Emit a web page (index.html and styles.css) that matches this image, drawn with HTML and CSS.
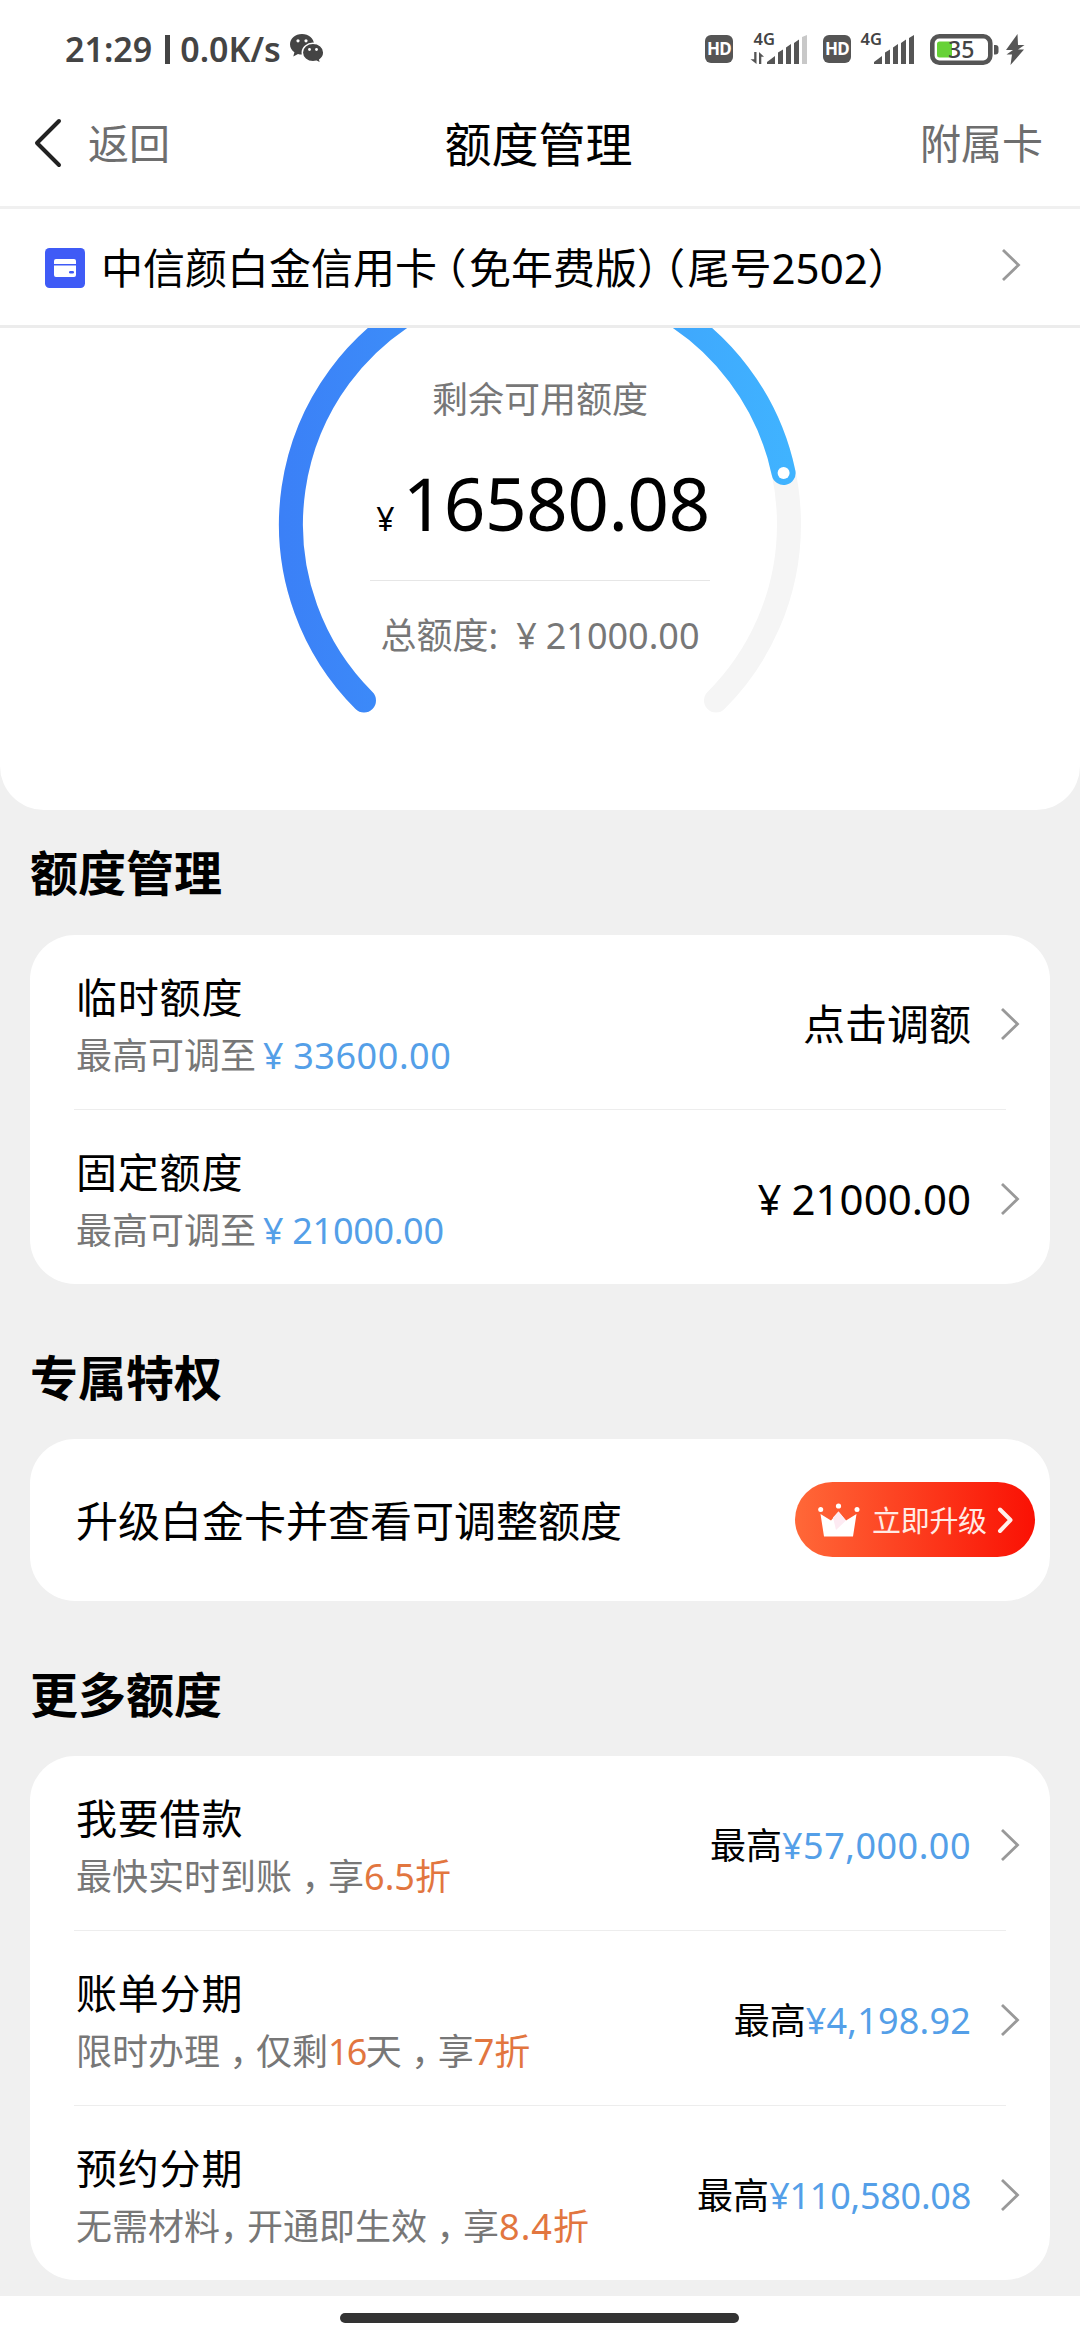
FILE: index.html
```html
<!DOCTYPE html>
<html lang="zh-CN">
<head>
<meta charset="utf-8">
<title>额度管理</title>
<link rel="stylesheet" href="styles.css">
</head>
<body>
<svg class="defs" aria-hidden="true">
  <symbol id="arrow" viewBox="0 0 20 36"><path d="M2 3 L17.5 18 L2 33" fill="none" stroke="#999" stroke-width="2.8"/></symbol>
</svg>
<div class="screen">
  <header class="status">
    <div class="status-left">
      <span class="clock">21:29</span><i class="bar"></i><span class="speed">0.0K/s</span>
      <svg class="wechat" width="34" height="30" viewBox="0 0 34 30">
        <path fill="#444" d="M12 0C5.2 0 0 4.6 0 10.3c0 3.300 1.700 6.100 4.400 8L3.300 22.500 8 20c1.300.4 2.600.6 4 .6C18.700 20.600 24 16 24 10.300S18.700 0 12 0z"/>
        <path fill="#444" stroke="#fff" stroke-width="1.500" d="M23 9.300c-6 0-10.700 4-10.700 9.200S17 27.800 23 27.800c1.200 0 2.400-.2 3.500-.5l4.300 2.200-1-3.700c2.400-1.700 4-4.300 4-7.300 0-5.200-4.800-9.200-10.800-9.200z"/>
        <g fill="#fff"><circle cx="8" cy="6.800" r="1.600"/><circle cx="16" cy="6.800" r="1.600"/><circle cx="19.500" cy="15.500" r="1.400"/><circle cx="26.500" cy="15.500" r="1.400"/></g>
      </svg>
    </div>
    <div class="status-right">
      <span class="hd">HD</span>
      <svg class="signal" width="58" height="48" viewBox="0 -8 58 48">
        <text class="net" x="3.500" y="13">4G</text>
        <g fill="#555"><path d="M4.200 20h2.300v12L.500 27.300h3.700z"/><path d="M9 32V20l5 4.700h-2.700V32z"/>
        <path d="M17 32v-2l8-6v8zM28 32V20.500l5-3V32zM36 32V15.500l5-3.500v20zM44 32V11l5-3.500V32z"/></g>
        <path fill="#c8c8c8" d="M52 32V5l5-2v29z"/>
      </svg>
      <span class="hd">HD</span>
      <svg class="signal second" width="58" height="48" viewBox="0 -8 58 48">
        <text class="net" x="3.500" y="13">4G</text>
        <path fill="#555" d="M17 32v-2l8-6v8zM28 32V20.500l5-3V32zM36 32V15.500l5-3.500v20zM44 32V11l5-3.500V32zM52 32V6l5-3v29z"/>
      </svg>
      <svg class="battery" width="96" height="32" viewBox="0 0 96 32">
        <rect x="2.300" y="3.300" width="58" height="26.400" rx="7" fill="none" stroke="#555" stroke-width="4.600"/>
        <rect x="7" y="8.500" width="15" height="16" rx="2.500" fill="#66d236"/>
        <path fill="#555" d="M64 12h1.500a3 3 0 0 1 3 3v3.500a3 3 0 0 1-3 3H64z"/>
        <text class="level" x="18" y="25">35</text>
        <path fill="#555" d="M87.500 1 76 17h7l-6.500 4.500H82L80.500 32 94 16.500h-6l6.500-4.500h-6.500z"/>
      </svg>
    </div>
  </header>

  <nav class="nav">
    <div class="back">
      <svg width="28" height="50" viewBox="0 0 28 50"><path d="M25 3 L3 25 L25 47" fill="none" stroke="#222" stroke-width="4" stroke-linecap="round" stroke-linejoin="round"/></svg>
      <span>返回</span>
    </div>
    <h1>额度管理</h1>
    <span class="extra">附属卡</span>
  </nav>

  <div class="picker">
    <svg class="card-icon" width="40" height="40" viewBox="0 0 40 40">
      <rect width="40" height="40" rx="4.500" fill="#3f5bf6"/>
      <path fill="#fff" d="M11 11h18a2 2 0 0 1 2 2v3H9v-3a2 2 0 0 1 2-2zM9 17.500h22V27a2 2 0 0 1-2 2H11a2 2 0 0 1-2-2z"/>
      <rect x="24" y="23" width="5" height="2.600" rx="1.300" fill="#3f5bf6"/>
    </svg>
    <span class="card-name">中信颜白金信用卡<span class="po">（</span>免年费版<span class="pc">）</span><span class="po next">（</span>尾号2502<span class="pc">）</span></span>
    <svg class="go" width="20" height="36"><use href="#arrow"/></svg>
  </div>

  <section class="gauge">
    <svg class="dial" width="540" height="400" viewBox="270 328 540 400">
      <defs><linearGradient id="ring" gradientUnits="userSpaceOnUse" x1="280" y1="0" x2="800" y2="0">
        <stop offset="0" stop-color="#3b80f7"/><stop offset="1" stop-color="#40b4ff"/></linearGradient></defs>
      <g fill="none" stroke-width="24" stroke-linecap="round">
        <path stroke="#f5f5f5" d="M364 700.500 A249 249 0 1 1 716 700.500"/>
        <path stroke="url(#ring)" d="M364 700.500 A249 249 0 1 1 783.600 473"/>
      </g>
      <circle cx="783.600" cy="473" r="6" fill="#fff"/>
    </svg>
    <div class="readout">
      <p class="muted">剩余可用额度</p>
      <p class="amount"><small>¥</small><b>16580.08</b></p>
      <p class="muted total">总额度:<span class="yen">¥</span><span class="sum">21000.00</span></p>
    </div>
  </section>

  <main class="body">
    <h2>额度管理</h2>
    <div class="card">
      <div class="row">
        <div class="info"><h3>临时额度</h3><p>最高可调至<span class="blue"><span class="yen">¥</span>33600.00</span></p></div>
        <span class="value">点击调额</span>
        <svg class="go" width="20" height="36"><use href="#arrow"/></svg>
      </div>
      <div class="row">
        <div class="info"><h3>固定额度</h3><p>最高可调至<span class="blue tight"><span class="yen">¥</span>21000.00</span></p></div>
        <span class="value money"><span class="yen">¥</span>21000.00</span>
        <svg class="go" width="20" height="36"><use href="#arrow"/></svg>
      </div>
    </div>

    <h2>专属特权</h2>
    <div class="card vip">
      <span class="vip-text">升级白金卡并查看可调整额度</span>
      <div class="upgrade">
        <svg width="42" height="34" viewBox="0 0 42 34"><g fill="#fff"><path d="M2.500 11 13 17.500 20.500 8.500 28 17.500 38.500 11 35 33.500H6z"/><circle cx="2.700" cy="6.500" r="2.500"/><circle cx="20.500" cy="3" r="2.600"/><circle cx="39" cy="6.500" r="2.500"/></g><path fill="#fdeaf2" d="M20.500 8.500 28 17.500 18 27 15 14.500z"/></svg>
        <span>立即升级</span>
        <svg width="18" height="30" viewBox="0 0 18 30"><path d="M3 4.500 L13.500 15 L3 26" fill="none" stroke="#fff0ec" stroke-width="4" stroke-linecap="round" stroke-linejoin="round"/></svg>
      </div>
    </div>

    <h2>更多额度</h2>
    <div class="card">
      <div class="row">
        <div class="info"><h3>我要借款</h3><p>最快实时到账<span class="mid">，</span>享<em>6.5折</em></p></div>
        <span class="value limit">最高<span class="blue wide">¥57,000.00</span></span>
        <svg class="go" width="20" height="36"><use href="#arrow"/></svg>
      </div>
      <div class="row">
        <div class="info"><h3>账单分期</h3><p>限时办理<span class="mid">，</span>仅剩<em class="days">16</em>天<span class="mid">，</span>享<em>7折</em></p></div>
        <span class="value limit">最高<span class="blue">¥4,198.92</span></span>
        <svg class="go" width="20" height="36"><use href="#arrow"/></svg>
      </div>
      <div class="row">
        <div class="info"><h3>预约分期</h3><p>无需材料<span class="short">，</span>开通即生效<span class="mid">，</span>享<em class="loose">8.4</em><em>折</em></p></div>
        <span class="value limit">最高<span class="blue narrow">¥110,580.08</span></span>
        <svg class="go" width="20" height="36"><use href="#arrow"/></svg>
      </div>
    </div>
  </main>
  <footer class="home"><i></i></footer>
</div>
</body>
</html>
```
FILE: styles.css
```css
* { box-sizing: border-box; margin: 0; padding: 0; }
body {
  width: 1080px;
  background: #fff;
  color: #000;
  font-family: "Noto Sans", "Noto Sans CJK SC", sans-serif;
  text-spacing-trim: space-all;
}
svg { display: block; flex: none; }
i, em { font-style: normal; }
.defs { width: 0; height: 0; position: absolute; }
.screen { width: 1080px; height: 2340px; display: flex; flex-direction: column; overflow: hidden; white-space: nowrap; }

/* system status bar */
.status { height: 97px; display: flex; justify-content: space-between; padding: 0 54px 0 65px; color: #444; }
.status-left { display: flex; align-items: center; font-size: 34px; font-weight: 600; height: 98px; }
.status-left .bar { width: 5px; height: 29px; background: #444; margin: 0 10px 0 13px; }
.wechat { margin-left: 9px; }
.status-right { display: flex; align-items: center; height: 98px; }
.hd { width: 28px; height: 28px; border-radius: 6px; background: #555; color: #fff; font: 700 17px/28px "Noto Sans", sans-serif; text-align: center; letter-spacing: -0.8px; }
.signal { margin: -2px 15px 0 17px; }
.signal.second { margin-left: 6px; }
.net { font: 600 16.500px "Noto Sans", sans-serif; fill: #444; }
.level { font: 500 23px "Noto Sans", sans-serif; fill: #444; }

/* page navigation */
.nav { height: 112px; display: grid; grid-template-columns: 1fr auto 1fr; align-items: center; padding: 0 37px 21px 34px; border-bottom: 3px solid #f0f0f0; font-size: 41px; color: #6e6e6e; }
.back { display: flex; align-items: center; }
.back svg { margin-top: 3px; }
.back span { margin-left: 26px; }
.nav h1 { font-size: 47px; font-weight: 400; color: #000; }
.extra { justify-self: end; }

.picker { height: 119px; display: flex; align-items: center; padding: 0 59px 0 45px; border-bottom: 3px solid #ececec; }
.card-name { flex: 1; margin: -3px 0 0 16px; font-size: 42px; }
.card-icon { margin-top: 1px; }
.picker .go { margin-top: -5px; }
.po, .pc, .short { font-feature-settings: "halt"; }
.po { margin: 0 2.500px 0 8.500px; }
.po.next { margin-left: 6px; }

/* gauge: the dial and its readout share one grid cell */
.gauge { height: 482px; display: grid; justify-items: center; align-items: start; background: #fff; border-radius: 0 0 44px 44px; position: relative; z-index: 1; }
.dial, .readout { grid-area: 1 / 1; }
.readout { width: 340px; padding-top: 46px; display: flex; flex-direction: column; align-items: center; }
.muted { font-size: 36px; line-height: 52px; color: #777; }
.amount { width: 340px; height: 155px; padding-left: 6px; border-bottom: 1px solid #e6e6e6; display: flex; align-items: baseline; justify-content: center; line-height: 154px; }
.amount small { font-size: 32px; margin-right: 8px; }
.amount b { font-size: 73px; font-weight: 400; letter-spacing: -0.600px; }
.total { margin-top: 29px; }
.yen { margin: 0 9px 0 7px; }
.total .yen { margin: 0 9px 0 18px; }

.body { height: 1536px; padding: 50px 30px 0; margin-top: -50px; background: #f0f0f0; }
h2 { height: 125px; font-size: 48px; line-height: 126px; font-weight: 700; }
.card { background: #fff; border-radius: 45px; }
.card + h2 { height: 155px; line-height: 187px; }
.row { height: 174px; padding: 3px 30px 0 46px; display: flex; align-items: center; }
.row + .row { height: 175px; background: linear-gradient(#ededed, #ededed) 44px 0 / 932px 1px no-repeat; padding-top: 4px; }
.info { flex: 1; padding-top: 6px; line-height: 58px; }
.info h3 { font-size: 41px; font-weight: 400; line-height: 57px; padding-bottom: 1px; letter-spacing: 0.800px; }
.info p { font-size: 36px; color: #777; }
.value { font-size: 42px; line-height: 60px; margin-right: 29px; }
.value .yen { margin: 0 10px 0 0; }
.value.limit { font-size: 36px; padding-top: 2px; }
.blue { color: #549fe8; letter-spacing: 0.200px; }
.info .blue { letter-spacing: 0.550px; }
.info .blue.tight { letter-spacing: -0.300px; }
.blue.wide { letter-spacing: 0.500px; }
.blue.narrow { letter-spacing: -0.250px; }
em { color: #e2763f; }
.days { letter-spacing: -1.800px; }
.loose { letter-spacing: 1px; }
/* centred comma, lowered to sit on the baseline */
.mid { font-family: "Noto Sans CJK TC", sans-serif; font-feature-settings: "locl" 0; line-height: 0; vertical-align: -0.3em; }
.short { margin-right: 9px; }

.vip { height: 162px; display: flex; align-items: center; justify-content: space-between; padding: 0 15px 0 46px; font-size: 42px; }
.vip-text { margin-top: -3px; }
.upgrade { width: 240px; height: 75px; border-radius: 38px; background: linear-gradient(90deg, #ff6838, #fa1104); display: flex; align-items: center; padding-left: 23px; font-size: 29px; color: #ffeae4; margin-top: -1px; }
.upgrade span { margin: -1px 10px 0 12px; letter-spacing: -0.300px; }

/* home gesture area */
.home { height: 44px; padding-top: 17px; background: #fff; }
.home i { display: block; width: 399px; height: 10px; margin-left: 340px; border-radius: 5px; background: #333; }
```
